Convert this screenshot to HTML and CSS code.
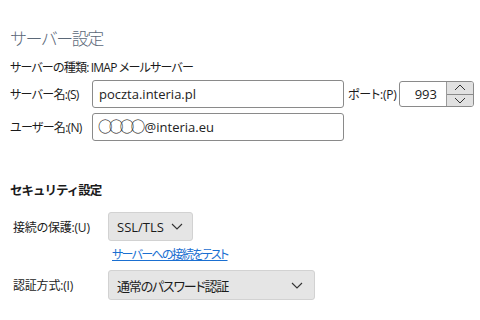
FILE: index.html
```html
<!DOCTYPE html>
<html>
<head>
	<meta charset="UTF-8">
	<title>サーバー設定</title>
	<link rel="stylesheet" href="styles.css">
</head>
<body>
	<div class="page">
		<h1 class="title">サーバー設定</h1>
		<div class="info">サーバーの種類: IMAP メールサーバー</div>

		<div class="row server">
			<label class="label kana">サーバー名:(S)</label>
			<div class="input wide">poczta.interia.pl</div>
			<label class="label port-label">ポート:(P)</label>
			<div class="port">
				<div class="port-value">993</div>
				<div class="spin">
					<span class="spin-btn">
						<svg width="12" height="7" viewBox="0 0 12 7"><path d="M1 6 L6 1 L11 6" fill="none" stroke="#333" stroke-width="1"/></svg>
					</span>
					<span class="spin-btn">
						<svg width="12" height="7" viewBox="0 0 12 7"><path d="M1 1 L6 6 L11 1" fill="none" stroke="#333" stroke-width="1"/></svg>
					</span>
				</div>
			</div>
		</div>

		<div class="row user">
			<label class="label kana">ユーザー名:(N)</label>
			<div class="input wide"><span class="mask">○○○○</span>@interia.eu</div>
		</div>

		<h2 class="section">セキュリティ設定</h2>

		<div class="row sec">
			<label class="label sec-label">接続の保護:(U)</label>
			<div class="select short">
				<span>SSL/TLS</span>
				<svg width="12" height="7" viewBox="0 0 12 7"><path d="M1 1 L6 6 L11 1" fill="none" stroke="#333" stroke-width="1.1"/></svg>
			</div>
		</div>
		<a class="test-link" href="#">サーバーへの接続をテスト</a>

		<div class="row sec auth">
			<label class="label sec-label">認証方式:(I)</label>
			<div class="select long">
				<span class="kana-val">通常のパスワード認証</span>
				<svg width="12" height="7" viewBox="0 0 12 7"><path d="M1 1 L6 6 L11 1" fill="none" stroke="#333" stroke-width="1.1"/></svg>
			</div>
		</div>
	</div>
</body>
</html>
```
FILE: styles.css
```css
*{
	margin: 0;
	padding: 0;
	box-sizing: border-box;
}
body{
	background: #fff;
	color: #1b1b1b;
	font-family: "Open Sans", "Noto Sans CJK JP", sans-serif;
	font-size: 12px;
	font-feature-settings: "palt";
}
.page{
	width: 480px;
	height: 320px;
	padding: 26px 0 0 10px;
}
.title{
	font: 300 17px/24px "Noto Sans CJK JP", sans-serif;
	letter-spacing: -1.5px;
	color: #5b6878;
}
.info{
	margin-top: 8px;
	line-height: 20px;
	font-size: 12px;
	letter-spacing: -0.8px;
}
.row{
	display: flex;
	align-items: center;
}
.server{
	margin-top: 2px;
	height: 28px;
}
.user{
	margin-top: 5px;
	height: 28px;
}
.label{
	width: 82px;
	font-size: 12px;
	white-space: nowrap;
	letter-spacing: -0.2px;
}
.kana{
	letter-spacing: -0.7px;
}
.input{
	height: 28px;
	border: 1px solid #8a8a8a;
	border-radius: 3px;
	padding-left: 6px;
	font-size: 13px;
	line-height: 26px;
	color: #222;
}
.mask{
	font-size: 14.5px;
	letter-spacing: -3.6px;
	margin-left: -1px;
	margin-right: 3px;
	color: #111;
}
.wide{
	width: 252px;
}
.port-label{
	width: 51px;
	margin-left: 4px;
}
.port{
	display: flex;
	width: 75px;
	height: 26px;
	border: 1px solid #8a8a8a;
	border-radius: 3px;
	overflow: hidden;
}
.port-value{
	flex: 1;
	text-align: right;
	padding-right: 9px;
	font-size: 13px;
	line-height: 24px;
}
.spin{
	width: 27px;
	display: flex;
	flex-direction: column;
	border-left: 1px solid #9a9a9a;
}
.spin-btn{
	flex: 1;
	display: flex;
	align-items: center;
	justify-content: center;
	background: #e1e1e1;
}
.spin-btn:first-child{
	border-bottom: 1px solid #8a8a8a;
}
.section{
	margin-top: 39px;
	font: bold 12.5px/20px "Noto Sans CJK JP", sans-serif;
	letter-spacing: -1px;
	color: #1b1b1b;
}
.sec{
	margin-top: 12px;
	padding-left: 3px;
	height: 29px;
}
.sec-label{
	width: 95px;
}
.select{
	display: flex;
	align-items: center;
	justify-content: space-between;
	height: 29px;
	background: #e5e5e5;
	border: 1px solid #d2d2d2;
	border-radius: 3px;
	padding: 0 9px 0 8px;
	font-size: 13px;
}
.short{
	width: 85px;
}
.long{
	width: 207px;
	height: 30px;
	padding-right: 11px;
}
.kana-val{
	letter-spacing: -1.2px;
}
.test-link{
	display: block;
	margin: 6px 0 0 102px;
	line-height: 16px;
	font-size: 12px;
	letter-spacing: -1.7px;
	color: #1a6fd1;
	text-decoration: underline;
}
.auth{
	margin-top: 7px;
	height: 30px;
}
```
